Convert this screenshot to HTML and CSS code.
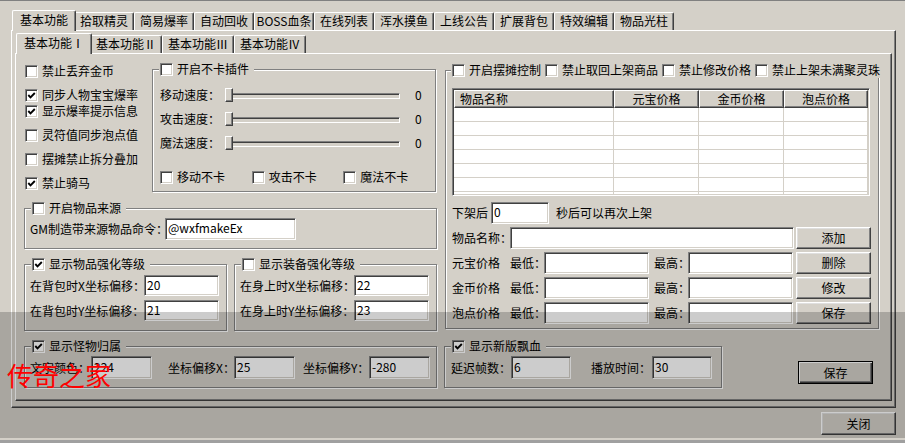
FILE: index.html
```html
<!DOCTYPE html>
<html lang="zh-CN">
<head>
    <meta charset="UTF-8">
    <title>基本功能</title>
    <link rel="stylesheet" href="styles.css">
</head>
<body>
    <div class="window">
        <div class="tabs">
            <div class="tab active">基本功能</div>
            <div class="tab">拾取精灵</div>
            <div class="tab">简易爆率</div>
            <div class="tab">自动回收</div>
            <div class="tab">BOSS血条</div>
            <div class="tab">在线列表</div>
            <div class="tab">浑水摸鱼</div>
            <div class="tab">上线公告</div>
            <div class="tab">扩展背包</div>
            <div class="tab">特效编辑</div>
            <div class="tab">物品光柱</div>
        </div>
        <div class="panel outer">
            <div class="tabs sub">
                <div class="tab active">基本功能Ⅰ</div>
                <div class="tab">基本功能Ⅱ</div>
                <div class="tab">基本功能Ⅲ</div>
                <div class="tab">基本功能Ⅳ</div>
            </div>
            <div class="panel inner">
                <div class="columns">
                    <!-- left column -->
                    <div class="col-left">
                        <div class="top-section">
                            <div class="check-list">
                                <label class="check"><span class="cb"></span>禁止丢弃金币</label>
                                <label class="check"><span class="cb"><svg width="9" height="9" viewBox="0 0 9 9"><path d="M1.3 4 L3.5 6.3 L7.8 2" fill="none" stroke="#000" stroke-width="1.9"/></svg></span>同步人物宝宝爆率</label>
                                <label class="check tight"><span class="cb"><svg width="9" height="9" viewBox="0 0 9 9"><path d="M1.3 4 L3.5 6.3 L7.8 2" fill="none" stroke="#000" stroke-width="1.9"/></svg></span>显示爆率提示信息</label>
                                <label class="check"><span class="cb"></span>灵符值同步泡点值</label>
                                <label class="check"><span class="cb"></span>摆摊禁止拆分叠加</label>
                                <label class="check"><span class="cb"><svg width="9" height="9" viewBox="0 0 9 9"><path d="M1.3 4 L3.5 6.3 L7.8 2" fill="none" stroke="#000" stroke-width="1.9"/></svg></span>禁止骑马</label>
                            </div>
                            <div class="group speed">
                                <div class="legend"><span class="cb"></span>开启不卡插件</div>
                                <div class="slider-row">
                                    <span class="slider-label">移动速度：</span>
                                    <div class="slider"><span class="thumb"></span></div>
                                    <span class="slider-value">0</span>
                                </div>
                                <div class="slider-row">
                                    <span class="slider-label">攻击速度：</span>
                                    <div class="slider"><span class="thumb"></span></div>
                                    <span class="slider-value">0</span>
                                </div>
                                <div class="slider-row">
                                    <span class="slider-label">魔法速度：</span>
                                    <div class="slider"><span class="thumb"></span></div>
                                    <span class="slider-value">0</span>
                                </div>
                                <div class="check-row">
                                    <label class="check"><span class="cb"></span>移动不卡</label>
                                    <label class="check"><span class="cb"></span>攻击不卡</label>
                                    <label class="check"><span class="cb"></span>魔法不卡</label>
                                </div>
                            </div>
                        </div>

                        <div class="group source">
                            <div class="legend"><span class="cb"></span>开启物品来源</div>
                            <div class="field">
                                <span class="field-label">GM制造带来源物品命令：</span>
                                <input class="edit" type="text" value="@wxfmakeEx">
                            </div>
                        </div>

                        <div class="group-pair">
                            <div class="group level">
                                <div class="legend"><span class="cb"><svg width="9" height="9" viewBox="0 0 9 9"><path d="M1.3 4 L3.5 6.3 L7.8 2" fill="none" stroke="#000" stroke-width="1.9"/></svg></span>显示物品强化等级</div>
                                <div class="field">
                                    <span class="field-label">在背包时X坐标偏移：</span>
                                    <input class="edit" type="text" value="20">
                                </div>
                                <div class="field">
                                    <span class="field-label">在背包时Y坐标偏移：</span>
                                    <input class="edit" type="text" value="21">
                                </div>
                            </div>
                            <div class="group level">
                                <div class="legend"><span class="cb"></span>显示装备强化等级</div>
                                <div class="field">
                                    <span class="field-label">在身上时X坐标偏移：</span>
                                    <input class="edit" type="text" value="22">
                                </div>
                                <div class="field">
                                    <span class="field-label">在身上时Y坐标偏移：</span>
                                    <input class="edit" type="text" value="23">
                                </div>
                            </div>
                        </div>

                        <div class="group monster">
                            <div class="legend"><span class="cb"><svg width="9" height="9" viewBox="0 0 9 9"><path d="M1.3 4 L3.5 6.3 L7.8 2" fill="none" stroke="#000" stroke-width="1.9"/></svg></span>显示怪物归属</div>
                            <div class="field">
                                <span class="field-label l1">文字颜色：</span>
                                <input class="edit" type="text" value="224">
                                <span class="field-label l2">坐标偏移X：</span>
                                <input class="edit" type="text" value="25">
                                <span class="field-label l3">坐标偏移Y：</span>
                                <input class="edit" type="text" value="-280">
                            </div>
                        </div>
                    </div>

                    <!-- right column -->
                    <div class="col-right">
                        <div class="group stall">
                            <div class="legend">
                                <label class="check"><span class="cb"></span>开启摆摊控制</label>
                                <label class="check"><span class="cb"></span>禁止取回上架商品</label>
                                <label class="check"><span class="cb"></span>禁止修改价格</label>
                                <label class="check"><span class="cb"></span>禁止上架未满聚灵珠</label>
                            </div>
                            <div class="list">
                                <table>
                                    <colgroup>
                                        <col style="width: 160px">
                                        <col style="width: 85px">
                                        <col style="width: 85px">
                                        <col style="width: 84px">
                                    </colgroup>
                                    <tr class="head">
                                        <th class="first">物品名称</th>
                                        <th>元宝价格</th>
                                        <th>金币价格</th>
                                        <th>泡点价格</th>
                                    </tr>
                                    <tr><td></td><td></td><td></td><td></td></tr>
                                    <tr><td></td><td></td><td></td><td></td></tr>
                                    <tr><td></td><td></td><td></td><td></td></tr>
                                    <tr><td></td><td></td><td></td><td></td></tr>
                                    <tr><td></td><td></td><td></td><td></td></tr>
                                    <tr><td></td><td></td><td></td><td></td></tr>
                                    <tr><td></td><td></td><td></td><td></td></tr>
                                </table>
                            </div>
                            <div class="field delay">
                                <span>下架后</span>
                                <input class="edit" type="text" value="0">
                                <span class="after">秒后可以再次上架</span>
                            </div>
                            <div class="field name">
                                <span class="field-label">物品名称：</span>
                                <input class="edit" type="text" value="">
                                <button class="btn">添加</button>
                            </div>
                            <div class="field price">
                                <span class="field-label">元宝价格</span>
                                <span class="l-min">最低：</span>
                                <input class="edit" type="text" value="">
                                <span class="l-max">最高：</span>
                                <input class="edit" type="text" value="">
                                <button class="btn">删除</button>
                            </div>
                            <div class="field price">
                                <span class="field-label">金币价格</span>
                                <span class="l-min">最低：</span>
                                <input class="edit" type="text" value="">
                                <span class="l-max">最高：</span>
                                <input class="edit" type="text" value="">
                                <button class="btn">修改</button>
                            </div>
                            <div class="field price">
                                <span class="field-label">泡点价格</span>
                                <span class="l-min">最低：</span>
                                <input class="edit" type="text" value="">
                                <span class="l-max">最高：</span>
                                <input class="edit" type="text" value="">
                                <button class="btn">保存</button>
                            </div>
                        </div>

                        <div class="bottom-row">
                            <div class="group blood">
                                <div class="legend"><span class="cb"><svg width="9" height="9" viewBox="0 0 9 9"><path d="M1.3 4 L3.5 6.3 L7.8 2" fill="none" stroke="#000" stroke-width="1.9"/></svg></span>显示新版飘血</div>
                                <div class="field">
                                    <span class="field-label l1">延迟帧数：</span>
                                    <input class="edit" type="text" value="6">
                                    <span class="field-label l2">播放时间：</span>
                                    <input class="edit" type="text" value="30">
                                </div>
                            </div>
                            <button class="btn default">保存</button>
                        </div>
                    </div>
                </div>
            </div>
        </div>
        <div class="footer">
            <button class="btn">关闭</button>
        </div>
    </div>

    <div class="shade"></div>
    <div class="watermark">传奇之家</div>
</body>
</html>
```

FILE: styles.css
```css
/* Classic dialog look */
* {
    box-sizing: border-box;
}
html, body {
    margin: 0;
}
body {
    position: relative;
    width: 905px;
    height: 443px;
    overflow: hidden;
    background: #d4d0c8;
    border-top: 1px solid #808080;
    border-bottom: 3px solid #a0a0a0;
    font-family: "Noto Sans CJK SC", "Noto Sans", sans-serif;
    font-size: 12px;
    line-height: 16px;
    color: #000;
}
.window {
    padding: 9px 0 0 11px;
}

/* Tabs */
.tabs {
    display: flex;
    align-items: flex-end;
    height: 20px;
    padding-left: 3px;
}
.tab {
    flex: none;
    width: 60px;
    height: 18px;
    border: 1px solid;
    border-bottom: 0;
    border-color: #fff #404040 #404040 #fff;
    border-radius: 2px 2px 0 0;
    box-shadow: inset -1px 0 #808080;
    text-align: center;
    line-height: 16px;
    white-space: nowrap;
}
.tab.active {
    position: relative;
    z-index: 1;
    width: 64px;
    height: 21px;
    margin: 0 -2px -1px;
    background: #d4d0c8;
    line-height: 18px;
}
.sub .tab {
    width: 72px;
}
.sub .tab.active {
    width: 76px;
}

/* Panels */
.panel {
    border: 1px solid;
    border-color: #fff #404040 #404040 #fff;
    box-shadow: inset -1px -1px #808080;
}
.outer {
    width: 885px;
    height: 378px;
    padding: 2px 0 0 3px;
}
.inner {
    width: 877px;
    height: 348px;
    padding: 0 0 0 8px;
}
.columns {
    display: flex;
}
.col-left {
    width: 413px;
}
.col-right {
    width: 435px;
    margin-left: 7px;
}

/* Checkboxes */
.check {
    display: flex;
    align-items: center;
    gap: 4px;
    height: 16px;
    white-space: nowrap;
}
.cb {
    flex: none;
    display: flex;
    align-items: center;
    justify-content: center;
    width: 13px;
    height: 13px;
    background: #fff;
    border: 1px solid;
    border-color: #808080 #fff #fff #808080;
    box-shadow: inset 1px 1px #404040, inset -1px -1px #d4d0c8;
}
.cb svg {
    display: block;
}
.top-section {
    display: flex;
    align-items: flex-start;
}
.check-list {
    width: 128px;
    padding: 9px 0 0 1px;
}
.check-list .check + .check {
    margin-top: 8px;
}
.check-list .check.tight {
    margin-top: 0;
}

/* Group boxes */
.group {
    position: relative;
    border: 1px solid #808080;
    box-shadow: inset 1px 1px #fff, 1px 1px #fff;
}
.legend {
    position: absolute;
    top: -9px;
    left: 6px;
    display: flex;
    align-items: center;
    gap: 4px;
    height: 16px;
    padding: 0 5px 0 1px;
    background: #d4d0c8;
    white-space: nowrap;
}

/* Speed sliders */
.speed {
    width: 284px;
    height: 123px;
    margin-top: 15px;
    padding: 17px 0 0 7px;
}
.slider-row {
    display: flex;
    align-items: center;
    height: 16px;
}
.slider-row + .slider-row {
    margin-top: 8px;
}
.slider-label {
    width: 65px;
    white-space: nowrap;
}
.slider {
    position: relative;
    width: 180px;
    height: 16px;
}
.slider::before {
    content: "";
    position: absolute;
    left: 3px;
    right: 5px;
    top: 6px;
    height: 4px;
    border: 1px solid;
    border-color: #808080 #fff #fff #808080;
    box-shadow: inset 1px 1px #404040;
}
.thumb {
    position: absolute;
    left: 0;
    top: 1px;
    width: 8px;
    height: 14px;
    background: #d4d0c8;
    border: 1px solid;
    border-color: #fff #404040 #404040 #fff;
    box-shadow: inset -1px -1px #808080;
}
.slider-value {
    margin-left: 10px;
}
.check-row {
    display: flex;
    margin-top: 18px;
}
.check-row .check {
    width: 102px;
}

/* Edits and buttons */
.field {
    display: flex;
    align-items: center;
    white-space: nowrap;
}
.field-label {
    flex: none;
}
.edit {
    flex: none;
    height: 22px;
    margin: 0;
    padding: 0 2px 3px;
    background: #fff;
    border: 1px solid;
    border-color: #808080 #fff #fff #808080;
    box-shadow: inset 1px 1px #404040, inset -1px -1px #d4d0c8;
    font: inherit;
    color: #000;
    outline: none;
}
.btn {
    flex: none;
    width: 75px;
    height: 22px;
    margin: 0;
    padding: 0;
    background: #d4d0c8;
    border: 1px solid;
    border-color: #fff #404040 #404040 #fff;
    box-shadow: inset -1px -1px #808080, inset 1px 1px #dfdfdf;
    font: inherit;
    color: #000;
}
.btn.default {
    height: 23px;
    border-color: #000;
    box-shadow: inset 1px 1px #fff, inset -1px -1px #404040, inset -2px -2px #808080;
}

/* Left groups */
.source {
    height: 41px;
    margin-top: 16px;
    padding: 9px 0 0 5px;
}
.source .field-label {
    width: 135px;
}
.source .edit {
    width: 131px;
}
.group-pair {
    display: flex;
    margin-top: 15px;
}
.level {
    width: 203px;
    height: 67px;
    padding: 10px 0 0 5px;
}
.level + .level {
    margin-left: 7px;
}
.level .field + .field {
    margin-top: 4px;
}
.level .field-label {
    width: 114px;
}
.level .edit {
    width: 75px;
    height: 21px;
}
.monster {
    height: 42px;
    margin-top: 15px;
    padding: 9px 0 0 5px;
}
.monster .edit,
.blood .edit {
    width: 61px;
    height: 23px;
}
.monster .l1 {
    width: 61px;
}
.monster .l2 {
    width: 66px;
    margin-left: 16px;
}
.monster .l3 {
    width: 66px;
    margin-left: 8px;
}

/* Stall group */
.stall {
    width: 434px;
    height: 259px;
    margin: 16px 0 0 1px;
    padding: 17px 0 0 6px;
}
.stall .legend {
    left: 5px;
    padding-right: 0;
}
.list {
    width: 418px;
    height: 108px;
    overflow: hidden;
    padding: 1px;
    background: #fff;
    border: 1px solid;
    border-color: #808080 #fff #fff #808080;
    box-shadow: inset 1px 1px #404040, inset -1px -1px #d4d0c8;
}
.list table {
    width: 414px;
    table-layout: fixed;
    border-collapse: separate;
    border-spacing: 0;
}
.list tr {
    height: 14px;
}
.list tr.head {
    height: 18px;
}
.list th {
    padding: 0;
    font-weight: normal;
    line-height: 14px;
    background: #d4d0c8;
    border: 1px solid;
    border-color: #fff #404040 #404040 #fff;
    box-shadow: inset -1px -1px #808080;
    text-align: center;
}
.list th.first {
    text-align: left;
    padding-left: 5px;
}
.list td {
    padding: 0;
    border-right: 1px solid #d4d0c8;
    border-bottom: 1px solid #d4d0c8;
}
.stall .field {
    height: 22px;
    margin-top: 3px;
}
.stall .field.delay {
    margin-top: 6px;
}
.delay .edit {
    width: 58px;
    margin-left: 3px;
}
.delay .after {
    margin-left: 7px;
}
.stall .field-label {
    width: 58px;
}
.name .edit {
    width: 284px;
}
.price .l-min,
.price .l-max {
    width: 34px;
}
.price .l-max {
    margin-left: 5px;
}
.price .edit {
    width: 105px;
}
.stall .btn {
    margin-left: auto;
    margin-right: 7px;
}

/* Bottom row on the right */
.bottom-row {
    display: flex;
    align-items: flex-start;
    margin-top: 17px;
}
.blood {
    width: 278px;
    height: 42px;
    padding: 9px 0 0 6px;
}
.blood .l1 {
    width: 60px;
}
.blood .l2 {
    width: 61px;
    margin-left: 20px;
}
.blood .edit {
    width: 60px;
}
.bottom-row .btn {
    margin: 15px 0 0 76px;
}

/* Footer */
.footer {
    display: flex;
    justify-content: flex-end;
    padding: 4px 9px 0 0;
}
.footer .btn {
    height: 23px;
}

/* Dimmed band and watermark over the screenshot */
.shade {
    position: absolute;
    left: 0;
    top: 311px;
    width: 905px;
    height: 126px;
    background: rgba(0, 0, 0, 0.2);
}
.watermark {
    position: absolute;
    left: 7px;
    top: 359px;
    font-size: 26px;
    line-height: 30px;
    color: #f00;
    white-space: nowrap;
}
```
